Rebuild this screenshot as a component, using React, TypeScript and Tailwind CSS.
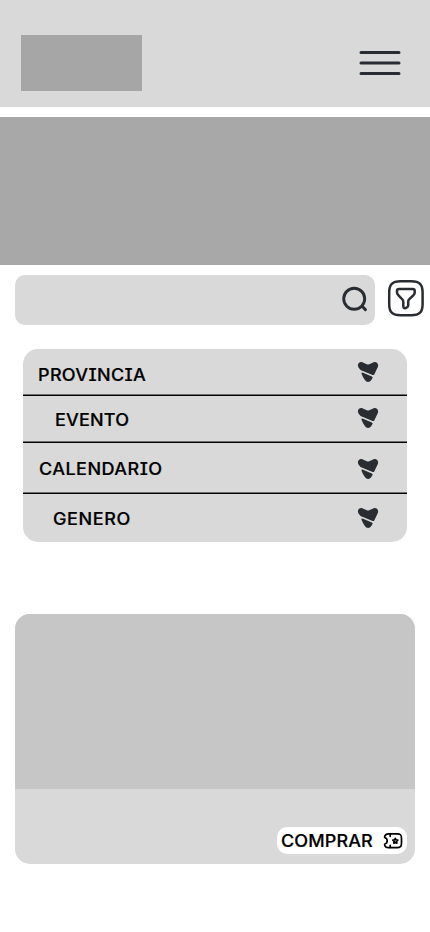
import React from "react";

const label =
  "inline-block origin-left scale-x-[1.06] font-['Inter','Noto_Sans',sans-serif] text-[17px] leading-6 font-medium text-black whitespace-nowrap [font-feature-settings:'cv08'] [-webkit-text-stroke:0.2px_#000]";

function MenuIcon() {
  return (
    <svg width="42" height="26" viewBox="0 0 42 26" fill="none" stroke="#292d32" strokeWidth="3" strokeLinecap="round">
      <path d="M2 2.6H40M2 13H40M2 23.4H40" />
    </svg>
  );
}

function SearchIcon() {
  return (
    <svg width="28" height="28" viewBox="0 0 28 28" fill="none" stroke="#292d32" strokeWidth="2.9" strokeLinecap="round">
      <circle cx="13.2" cy="12.8" r="10.5" />
      <path d="M21.6 20.8L24.4 23.6" strokeWidth="3" />
    </svg>
  );
}

function FilterIcon() {
  return (
    <svg width="38" height="38" viewBox="0 0 38 38" fill="none" stroke="#292d32" strokeWidth="2.5" strokeLinecap="round" strokeLinejoin="round">
      <path d="M13.5 2.3H24.3C32.5 2.3 35.6 5.4 35.6 13.7V24.9C35.6 33.2 32.5 36.3 24.3 36.3H13.5C5.3 36.3 2.2 33.2 2.2 24.9V13.7C2.2 5.4 5.3 2.3 13.5 2.3Z" />
      <path d="M12.1 9.9H25.8Q27.7 9.9 27.7 11.8V13.6Q27.7 15 26.3 16.4L22.3 20.2Q21.2 21.2 21.2 22.9V26.2Q21.2 27.4 20.1 28.2L18.9 29Q16.3 29.8 16.3 27.2V23Q16.3 21.6 15.4 20.5L11.3 16.2Q10 14.9 10 13.6V11.8Q10 9.9 12.1 9.9Z" />
    </svg>
  );
}

function ArrowIcon() {
  return (
    <svg className="block" width="22" height="22" viewBox="0 0 22 22" fill="#292d32">
      <path d="M1.5 6.5C-.4 3 2.5 .1 5.8 1.4L9.8 3.3Q11 3.8 12.2 3.3L16.2 1.4C19.5 .1 22.2 3 20.7 6.2L17.4 13.2Q16.8 14.4 15.6 13.9L4.7 9.6Q3.8 9.3 3.3 8.7Z" />
      <path d="M5.4 11.6L14.9 15.4Q16.1 15.9 15.5 17L14.3 19.1C12.8 21.6 9.4 21.6 7.9 19.1Q5.8 16.1 4.5 12.7Q4.2 11.3 5.4 11.6Z" />
    </svg>
  );
}

function TicketIcon() {
  return (
    <svg width="20" height="18" viewBox="0 0 20 18" fill="none" stroke="#000" strokeWidth="1.7" strokeLinecap="round" strokeLinejoin="round">
      <path d="M1.6 12.2C5.1 11.2 5.1 6.4 1.6 5.5C1.6 2.7 2.8 1.8 5.9 1.8H14.2C17.5 1.8 18.5 2.8 18.5 6.2V11.2C18.5 14.6 17.5 15.6 14.2 15.6H5.9C2.8 15.6 1.6 14.8 1.6 12.2Z" />
      <path d="M7.2 2V4.3M7.2 13.4V15.4" />
      <path d="M12.3 6.3L13 8L14.8 8.2L13.5 9.4L13.8 11.2L12.3 10.4L10.8 11.2L11.1 9.4L9.8 8.2L11.6 8Z" />
    </svg>
  );
}

const rows = [
  { text: "PROVINCIA", row: "h-[47px] border-b shadow-[inset_0_-1px_0_#6d6d6d] pb-px", name: "ml-[15px] mt-[7px] tracking-[0.3px]", icon: "pt-px" },
  { text: "EVENTO", row: "h-[47px] border-b shadow-[inset_0_-1px_0_#6d6d6d]", name: "ml-[31.5px] mt-px tracking-[0.15px]", icon: "-mt-0.5" },
  { text: "CALENDARIO", row: "h-[51px] border-b shadow-[inset_0_-1px_0_#6d6d6d]", name: "ml-4 mt-px tracking-[0.42px]", icon: "pt-0.5" },
  { text: "GENERO", row: "h-12", name: "ml-[30px] mt-[2px] tracking-[0.55px]", icon: "" },
];

export default function App() {
  return (
    <main className="flex h-[932px] w-[430px] flex-col overflow-hidden bg-white">
      <header className="flex h-[107px] shrink-0 items-start justify-between bg-[#d9d9d9] pt-[35px] pr-[29px] pl-[21px]">
        <div className="h-14 w-[121px] bg-[#a6a6a6]" />
        <button aria-label="Menú" className="mt-[15px]"><MenuIcon /></button>
      </header>

      <div className="mt-2.5 h-[148px] shrink-0 bg-[#a8a8a8]" />

      <div className="mt-2.5 flex h-[50px] shrink-0 pl-[15px]">
        <div className="flex w-[360px] items-start justify-end rounded-[10px] bg-[#d9d9d9] pt-[11px] pr-1.5">
          <SearchIcon />
        </div>
        <button aria-label="Filtrar" className="mt-1 ml-3 self-start"><FilterIcon /></button>
      </div>

      <ul className="mt-6 ml-[23px] flex h-[193px] w-96 shrink-0 flex-col overflow-hidden rounded-[15px] bg-[#d9d9d9]">
        {rows.map((r) => (
          <li key={r.text} className={`flex shrink-0 items-center justify-between border-black pr-7 ${r.row}`}>
            <span className={`${label} ${r.name}`}>{r.text}</span>
            <span className={r.icon}><ArrowIcon /></span>
          </li>
        ))}
      </ul>

      <section className="mt-[72px] ml-[15px] flex h-[250px] w-[400px] shrink-0 flex-col overflow-hidden rounded-[15px] bg-[#d9d9d9]">
        <div className="h-[175px] bg-[#c6c6c6]" />
        <div className="flex flex-1 items-end justify-end pr-2 pb-2.5">
          <button className="flex h-[27px] w-[130px] items-center justify-between rounded-[10px] bg-white pr-1 pl-1">
            <span className={`${label} tracking-[0.1px]`}>COMPRAR</span>
            <TicketIcon />
          </button>
        </div>
      </section>
    </main>
  );
}
